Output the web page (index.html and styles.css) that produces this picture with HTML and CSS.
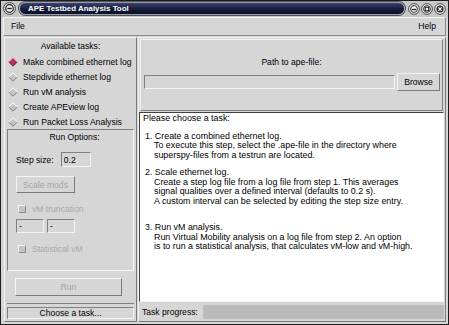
FILE: index.html
```html
<!DOCTYPE html>
<html>
<head>
    <title>APE Testbed Analysis Tool</title>
    <link rel="stylesheet" href="styles.css">
</head>
<body>
    <div class="window">
        <div class="titlebar">
            <span class="tb-icon">
                <svg width="13" height="13" viewBox="0 0 13 13">
                    <circle cx="6.5" cy="6.5" r="6" fill="#d8d8d8" stroke="#4a4a4a"/>
                    <circle cx="6.5" cy="6.5" r="3.8" fill="#f0f0f0" stroke="#202020" stroke-width="1.2"/>
                    <line x1="4.3" y1="6.5" x2="8.7" y2="6.5" stroke="#202020" stroke-width="1.4"/>
                </svg>
            </span>
            <div class="tb-title">APE Testbed Analysis Tool</div>
            <div class="tb-buttons">
                <svg width="12" height="12" viewBox="0 0 12 12">
                    <circle cx="6" cy="6" r="5.4" fill="#e4e4e4" stroke="#505050"/>
                    <circle cx="6" cy="6" r="3.4" fill="#fafafa" stroke="#303030"/>
                    <line x1="4" y1="6.5" x2="8" y2="6.5" stroke="#202020" stroke-width="1.3"/>
                </svg>
                <svg width="12" height="12" viewBox="0 0 12 12">
                    <circle cx="6" cy="6" r="5.4" fill="#e4e4e4" stroke="#505050"/>
                    <circle cx="6" cy="6" r="3.4" fill="#fafafa" stroke="#303030"/>
                    <rect x="4.3" y="4.3" width="3.4" height="3.4" fill="none" stroke="#202020"/>
                </svg>
                <svg width="12" height="12" viewBox="0 0 12 12">
                    <circle cx="6" cy="6" r="5.4" fill="#e4e4e4" stroke="#505050"/>
                    <circle cx="6" cy="6" r="3.6" fill="#303030"/>
                    <path d="M4.4 4.4 L7.6 7.6 M7.6 4.4 L4.4 7.6" stroke="#fafafa" stroke-width="1.3"/>
                </svg>
            </div>
        </div>

        <div class="menubar">
            <span>File</span>
            <span>Help</span>
        </div>

        <div class="main">
            <div class="left">
                <div class="tasks">
                    <div class="panel-title">Available tasks:</div>
                    <ul class="task-list">
                        <li class="task selected">
                            <svg class="radio" width="10" height="10" viewBox="0 0 10 10">
                                <polygon points="5,0.8 9.2,5 5,9.2 0.8,5" fill="#b8305c"/>
                                <polyline points="0.8,5 5,0.8 9.2,5" fill="none" stroke="#e090a8"/>
                                <polyline points="0.8,5 5,9.2 9.2,5" fill="none" stroke="#702040"/>
                            </svg>
                            Make combined ethernet log
                        </li>
                        <li class="task">
                            <svg class="radio" width="10" height="10" viewBox="0 0 10 10">
                                <polygon points="5,0.8 9.2,5 5,9.2 0.8,5" fill="#c4c4c4"/>
                                <polyline points="0.8,5 5,0.8 9.2,5" fill="none" stroke="#ffffff"/>
                                <polyline points="0.8,5 5,9.2 9.2,5" fill="none" stroke="#808080"/>
                            </svg>
                            Stepdivide ethernet log
                        </li>
                        <li class="task">
                            <svg class="radio" width="10" height="10" viewBox="0 0 10 10">
                                <polygon points="5,0.8 9.2,5 5,9.2 0.8,5" fill="#c4c4c4"/>
                                <polyline points="0.8,5 5,0.8 9.2,5" fill="none" stroke="#ffffff"/>
                                <polyline points="0.8,5 5,9.2 9.2,5" fill="none" stroke="#808080"/>
                            </svg>
                            Run vM analysis
                        </li>
                        <li class="task">
                            <svg class="radio" width="10" height="10" viewBox="0 0 10 10">
                                <polygon points="5,0.8 9.2,5 5,9.2 0.8,5" fill="#c4c4c4"/>
                                <polyline points="0.8,5 5,0.8 9.2,5" fill="none" stroke="#ffffff"/>
                                <polyline points="0.8,5 5,9.2 9.2,5" fill="none" stroke="#808080"/>
                            </svg>
                            Create APEview log
                        </li>
                        <li class="task">
                            <svg class="radio" width="10" height="10" viewBox="0 0 10 10">
                                <polygon points="5,0.8 9.2,5 5,9.2 0.8,5" fill="#c4c4c4"/>
                                <polyline points="0.8,5 5,0.8 9.2,5" fill="none" stroke="#ffffff"/>
                                <polyline points="0.8,5 5,9.2 9.2,5" fill="none" stroke="#808080"/>
                            </svg>
                            Run Packet Loss Analysis
                        </li>
                    </ul>
                </div>

                <div class="options">
                    <div class="panel-title">Run Options:</div>
                    <div class="step-row">
                        <label for="stepSize">Step size:</label>
                        <input type="text" id="stepSize" class="entry step-entry" value="0.2">
                    </div>
                    <button type="button" class="btn scale-btn" disabled>Scale mods</button>
                    <div class="check disabled"><span class="box"></span>vM truncation</div>
                    <div class="range-row">
                        <input type="text" class="entry small-entry" value="-">
                        <input type="text" class="entry small-entry" value="-">
                    </div>
                    <div class="check disabled"><span class="box"></span>Statistical vM</div>
                </div>

                <div class="run-section">
                    <button type="button" class="btn run-btn" disabled>Run</button>
                </div>

                <div class="status">Choose a task...</div>
            </div>

            <div class="right">
                <div class="path-section">
                    <div class="path-label">Path to ape-file:</div>
                    <div class="path-row">
                        <input type="text" class="entry path-entry">
                        <button type="button" class="btn browse-btn">Browse</button>
                    </div>
                </div>

                <div class="text-area">
                    <p class="intro">Please choose a task:</p>
                    <div class="step">
                        <p>1. Create a combined ethernet log.</p>
                        <p class="sub">To execute this step, select the .ape-file in the directory where</p>
                        <p class="sub">superspy-files from a testrun are located.</p>
                    </div>
                    <div class="step">
                        <p>2. Scale ethernet log.</p>
                        <p class="sub">Create a step log file from a log file from step 1. This averages</p>
                        <p class="sub">signal qualities over a defined interval (defaults to 0.2 s).</p>
                        <p class="sub">A custom interval can be selected by editing the step size entry.</p>
                    </div>
                    <div class="step wide-gap">
                        <p>3. Run vM analysis.</p>
                        <p class="sub">Run Virtual Mobility analysis on a log file from step 2. An option</p>
                        <p class="sub">is to run a statistical analysis, that calculates vM-low and vM-high.</p>
                    </div>
                </div>

                <div class="progress-row">
                    <span>Task progress:</span>
                    <div class="progress-bar"></div>
                </div>
            </div>
        </div>
    </div>
</body>
</html>
```

FILE: styles.css
```css
body {
    margin: 0;
    font-family: 'Liberation Sans', Arial, sans-serif;
    font-size: 8.6px;
    color: #000;
}
.window {
    width: 449px;
    height: 325px;
    box-sizing: border-box;
    background: #d6d6d6;
    border: 1px solid #1e1e1e;
    display: flex;
    flex-direction: column;
}
.titlebar {
    height: 16px;
    display: flex;
    align-items: center;
    padding: 0 2px;
    background: #c8c8c8;
}
.tb-icon {
    display: flex;
    margin-right: 3px;
}
.tb-title {
    flex: 1;
    height: 11px;
    border: 1px solid #9a9ca8;
    border-radius: 7px;
    background: linear-gradient(#3a4270, #161c3a 55%, #0c1028);
    color: #fff;
    font-weight: bold;
    font-size: 7.9px;
    line-height: 11px;
    padding-left: 8px;
    box-shadow: 0 0 0 1px #505258;
}
.tb-buttons {
    display: flex;
    gap: 1px;
    margin-left: 3px;
}
.menubar {
    height: 18px;
    margin: 0 2px;
    border: 1px solid #8a8a8a;
    border-top-color: #f4f4f4;
    border-left-color: #f4f4f4;
    display: flex;
    justify-content: space-between;
    align-items: center;
    padding: 0 9px 0 7px;
}
.main {
    flex: 1;
    display: flex;
    gap: 1px;
    margin: 1px 2px 2px 3px;
}
.left {
    width: 131px;
    display: flex;
    flex-direction: column;
    border: 1px solid #f2f2f2;
    border-right-color: #7a7a7a;
    border-bottom-color: #7a7a7a;
}
.tasks {
    height: 88px;
    padding-top: 3px;
}
.panel-title {
    text-align: center;
    height: 11px;
    line-height: 11px;
}
.task-list {
    list-style: none;
    margin: 2px 0 0 0;
    padding: 0 0 0 3px;
}
.task {
    height: 15px;
    display: flex;
    align-items: center;
    gap: 5px;
}
.options {
    height: 138px;
    margin: 0 2px;
    border: 1px solid #808080;
    border-right-color: #f6f6f6;
    border-bottom-color: #f6f6f6;
    padding: 2px 0 0 8px;
}
.step-row {
    display: flex;
    align-items: center;
    gap: 7px;
    margin-top: 9px;
}
.entry {
    font-family: inherit;
    font-size: 8.6px;
    box-sizing: border-box;
    height: 15px;
    border: 1px solid #808080;
    border-right-color: #f4f4f4;
    border-bottom-color: #f4f4f4;
    background: #d6d6d6;
    padding: 0 2px;
    outline: none;
}
.step-entry {
    width: 30px;
}
.btn {
    font-family: inherit;
    font-size: 8.6px;
    background: #d6d6d6;
    border: 1px solid #f4f4f4;
    border-right-color: #7a7a7a;
    border-bottom-color: #7a7a7a;
    padding: 0;
    color: #000;
}
.btn:disabled {
    color: #a4a4a4;
}
.scale-btn {
    display: block;
    width: 59px;
    height: 17px;
    margin: 9px 0 0 0;
}
.check {
    display: flex;
    align-items: center;
    gap: 6px;
    height: 12px;
    margin: 10px 0 0 2px;
}
.check.disabled {
    color: #a8a8a8;
}
.box {
    width: 6px;
    height: 6px;
    border: 1px solid #f4f4f4;
    border-right-color: #8a8a8a;
    border-bottom-color: #8a8a8a;
    background: #c4c4c4;
}
.range-row {
    display: flex;
    gap: 3px;
    margin-top: 4px;
}
.small-entry {
    width: 28px;
    height: 14px;
}
.run-section {
    height: 32px;
    margin: 0 2px;
    display: flex;
    align-items: center;
    padding-left: 8px;
    border-bottom: 1px solid #808080;
}
.run-btn {
    width: 107px;
    height: 18px;
}
.status {
    flex: 1;
    margin: 3px 2px 2px 2px;
    border: 1px solid #808080;
    border-right-color: #f4f4f4;
    border-bottom-color: #f4f4f4;
    display: flex;
    align-items: center;
    justify-content: center;
}
.right {
    flex: 1;
    display: flex;
    flex-direction: column;
    border: 1px solid #f2f2f2;
    border-right-color: #7a7a7a;
    border-bottom-color: #7a7a7a;
}
.path-section {
    height: 70px;
    border: 1px solid #f4f4f4;
    border-right-color: #808080;
    border-bottom-color: #808080;
    margin: 1px 2px 0 1px;
}
.path-label {
    text-align: center;
    margin-top: 17px;
    height: 11px;
    line-height: 11px;
}
.path-row {
    display: flex;
    align-items: center;
    gap: 2px;
    margin: 5px 2px 0 3px;
}
.path-entry {
    flex: 1;
    height: 14px;
}
.browse-btn {
    width: 43px;
    height: 18px;
}
.text-area {
    height: 186px;
    margin: 1px 1px 0 0;
    background: #fff;
    border: 1px solid #404040;
    border-right-color: #f4f4f4;
    border-bottom-color: #f4f4f4;
    padding: 1px 3px;
    font-size: 8.9px;
    line-height: 9.5px;
}
.text-area p {
    margin: 0;
    white-space: nowrap;
}
.step {
    margin-top: 8px;
    padding-left: 2px;
}
.step.wide-gap {
    margin-top: 17px;
}
.sub {
    padding-left: 9px;
}
.progress-row {
    flex: 1;
    display: flex;
    align-items: center;
    gap: 5px;
    padding: 0 1px 0 3px;
}
.progress-bar {
    flex: 1;
    height: 14px;
    background: #bababa;
}
```
